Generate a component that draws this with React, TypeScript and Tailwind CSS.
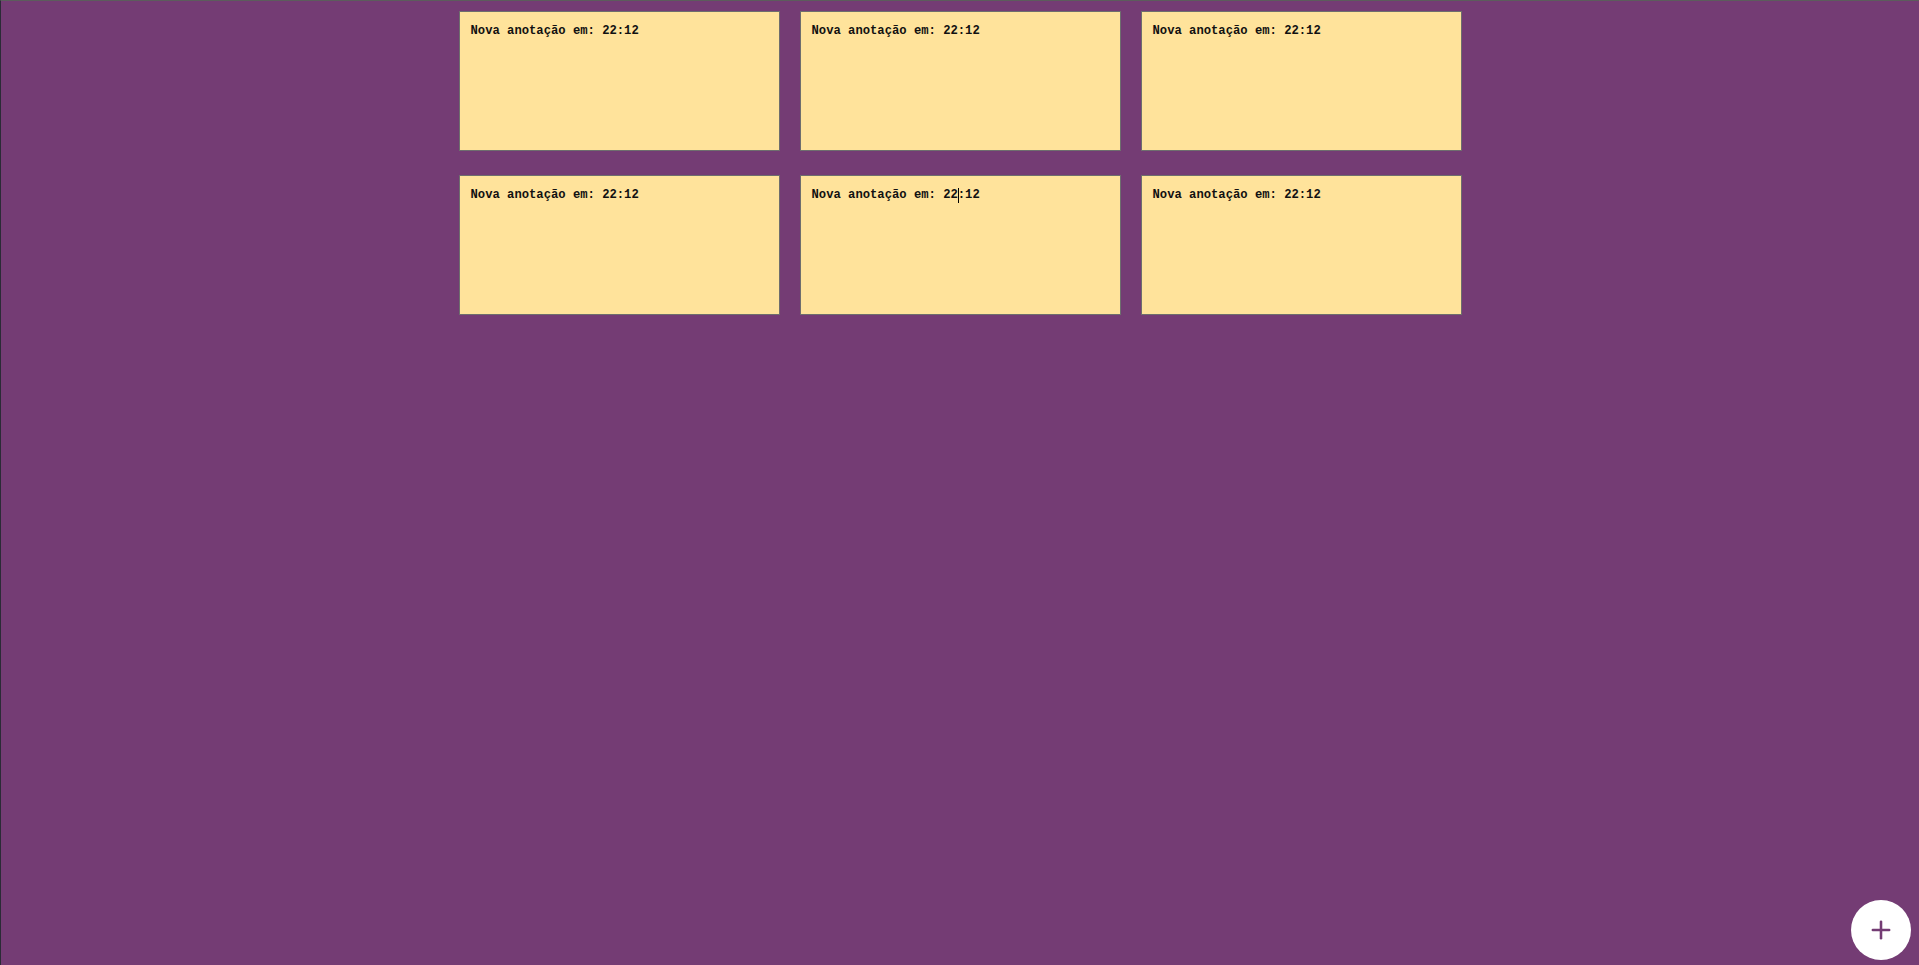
import { Plus } from "lucide-react";

const notes = [
  { id: 1, text: "Nova anotação em: 22:12" },
  { id: 2, text: "Nova anotação em: 22:12" },
  { id: 3, text: "Nova anotação em: 22:12" },
  { id: 4, text: "Nova anotação em: 22:12" },
  { id: 5, text: "Nova anotação em: 22:12", caret: 20 },
  { id: 6, text: "Nova anotação em: 22:12" },
];

function Note({ text, caret }: { text: string; caret?: number }) {
  return (
    <div className="h-[140px] border border-[#6e6e6e] bg-[#ffe39b] px-[11px] pt-[11px]">
      <p className="whitespace-pre text-[12.2px] font-bold leading-[16px] text-[#111] [font-family:'Liberation_Mono',monospace]">
        {caret === undefined ? (
          text
        ) : (
          <>
            {text.slice(0, caret)}
            <span className="relative">
              <span className="absolute left-0 top-0 h-[15px] w-px bg-black" />
            </span>
            {text.slice(caret)}
          </>
        )}
      </p>
    </div>
  );
}

export default function App() {
  return (
    <main className="relative h-screen w-full overflow-hidden border-l border-t border-l-[#2b2b36] border-t-[#5c5c5c] bg-[#743c74]">
      <section className="mx-auto grid w-[1003px] grid-cols-[repeat(3,321px)] gap-x-[20px] gap-y-[24px] pt-[10px]">
        {notes.map((n) => (
          <Note key={n.id} text={n.text} caret={n.caret} />
        ))}
      </section>
      <button
        aria-label="Nova anotação"
        className="absolute bottom-[5px] right-[8px] flex h-[60px] w-[60px] items-center justify-center rounded-full bg-white text-[#743c74]"
      >
        <Plus className="h-[28px] w-[28px]" strokeWidth={2.2} />
      </button>
    </main>
  );
}
